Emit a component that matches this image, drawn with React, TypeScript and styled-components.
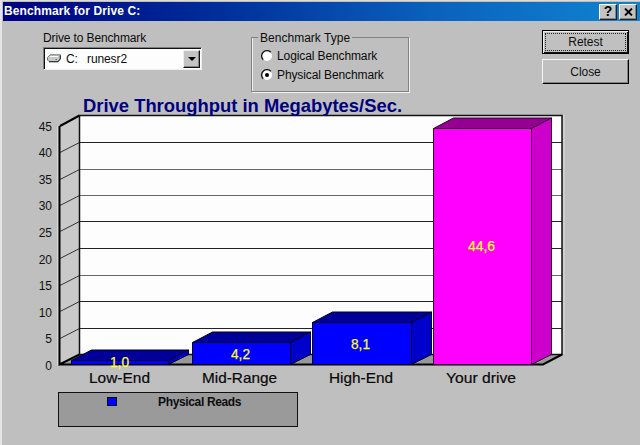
import React from 'react';
import styled, { createGlobalStyle } from 'styled-components';

const GlobalStyle = createGlobalStyle`
  * { box-sizing: border-box; }
  body { margin: 0; background: #bfbfbf; font-family: 'Liberation Sans', Arial, sans-serif; }
`;

const Dialog = styled.div`
  width: 640px;
  height: 445px;
  overflow: hidden;
  background: #bfbfbf;
  border-top: 1px solid #dcdcdc;
  border-left: 2px solid #e4e4e4;
  padding: 1px 0 0 1px;
  color: #0c0c0c;
`;

const TitleBar = styled.header`
  display: flex;
  align-items: center;
  height: 19px;
  padding: 0 3px 0 1px;
  background: linear-gradient(90deg, #000080 0%, #00309c 35%, #0b62bd 68%, #1084d0 100%);
`;

const Title = styled.h1`
  flex: 1;
  margin: 0;
  font-size: 12px;
  line-height: 19px;
  letter-spacing: 0.1px;
  color: #fff;
`;

const CaptionButton = styled.button<{ $gap?: number }>`
  display: flex;
  align-items: center;
  justify-content: center;
  width: 18px;
  height: 16px;
  margin-left: ${(p) => p.$gap ?? 0}px;
  padding: 0;
  background: #c3c3c3;
  border: 1px solid;
  border-color: #fff #202020 #202020 #fff;
  box-shadow: inset -1px -1px #858585;
  font: bold 14px/13px 'Liberation Sans', Arial, sans-serif;
  color: #000;
`;

const Controls = styled.section`
  display: flex;
  align-items: flex-start;
  height: 73px;
  padding: 9px 10px 0 40px;
`;

const DriveField = styled.div`
  width: 159px;
  margin-right: 49px;
`;

const Label = styled.div`
  height: 17px;
  font-size: 12px;
  line-height: 16px;
  letter-spacing: -0.13px;
  white-space: nowrap;
`;

const Select = styled.div`
  display: flex;
  align-items: center;
  height: 23px;
  padding: 0 1px 0 3px;
  background: #fdfdfd;
  border: 1px solid;
  border-color: #808080 #eee #eee #808080;
  box-shadow: inset 1px 1px #101010;
  font-size: 12px;
  letter-spacing: -0.1px;
`;

const DriveLetter = styled.span`
  width: 21px;
  margin-left: 5px;
`;

const DriveName = styled.span`
  flex: 1;
`;

const DropButton = styled.button`
  display: flex;
  align-items: center;
  justify-content: center;
  width: 17px;
  height: 18px;
  padding: 0;
  background: #c3c3c3;
  border: 1px solid;
  border-color: #eee #111 #111 #eee;
  box-shadow: inset -1px -1px #848484;
`;

const Group = styled.fieldset`
  width: 158px;
  height: 63px;
  margin: -1px 133px 0 0;
  padding: 0 0 0 9px;
  min-width: 0;
  border: 1px solid #828282;
  box-shadow: 1px 1px #f0f0f0, inset 1px 0 #f0f0f0;
`;

const Legend = styled.legend`
  margin-left: -3px;
  padding: 0 2px;
  height: 17px;
  font-size: 12px;
  line-height: 18px;
  letter-spacing: 0.02px;
`;

const Radio = styled.label`
  display: flex;
  align-items: center;
  gap: 4px;
  height: 19px;
  font-size: 12px;
  letter-spacing: -0.11px;
  white-space: nowrap;
`;

const Buttons = styled.div`
  display: flex;
  flex-direction: column;
  gap: 5px;
`;

const PushButton = styled.button<{ $focused?: boolean }>`
  width: 87px;
  height: ${(p) => (p.$focused ? 24 : 25)}px;
  padding: 1px;
  background: #c0c0c0;
  border: 1px solid;
  border-color: ${(p) => (p.$focused ? '#000' : '#f6f6f6 #000 #000 #f6f6f6')};
  box-shadow: ${(p) =>
    p.$focused ? 'inset 1px 1px #eee, inset -1px -1px #111' : 'inset -1px -1px #828282'};
  font: 12px 'Liberation Sans', Arial, sans-serif;
  letter-spacing: -0.05px;
  color: #101010;
`;

const FocusRing = styled.span`
  display: flex;
  align-items: center;
  justify-content: center;
  height: 18px;
  margin: 0 1px;
  border: 1px dotted #222;
`;

const Chart = styled.svg`
  display: block;
  width: 637px;
  height: 295px;
`;

const Legends = styled.footer`
  display: flex;
  align-items: flex-start;
  width: 240px;
  height: 35px;
  margin: 3px 0 0 55px;
  padding: 4px 0 0 48px;
  background: #999a99;
  border: 1px solid #111;
`;

const Swatch = styled.span`
  width: 10px;
  height: 9px;
  background: #0000fc;
  border: 1px solid #080820;
`;

const LegendText = styled.span`
  margin-left: 41px;
  font-size: 12px;
  font-weight: bold;
  line-height: 10px;
  letter-spacing: -0.35px;
`;

const bars = [
  { name: 'Low-End', value: '1,0', x: 71.5, y: 360.5, w: 97, tx: 89, tw: 61, vx: 110, vy: 367, vw: 19 },
  { name: 'Mid-Range', value: '4,2', x: 192.5, y: 342.5, w: 98, tx: 202, tw: 75, vx: 231, vy: 359, vw: 19 },
  { name: 'High-End', value: '8,1', x: 312.5, y: 322.5, w: 99, tx: 329, tw: 64, vx: 351, vy: 349, vw: 19 },
  { name: 'Your drive', value: '44,6', x: 433.5, y: 128.5, w: 98, tx: 446, tw: 70, vx: 468, vy: 251, vw: 27, own: true },
];
const backLines = [142.5, 169.5, 195.5, 221.5, 248.5, 275.5, 301.5, 328.5];
const labels = [45, 40, 35, 30, 25, 20, 15, 10, 5, 0];

const RadioMark = ({ on }: { on?: boolean }) => (
  <svg width="12" height="12" viewBox="0 0 12 12">
    <circle cx="6" cy="6" r="5" fill="#fff" />
    <path d="M2.2 9.8A5.2 5.2 0 0 1 9.8 2.2" fill="none" stroke="#111" strokeWidth="1.3" />
    {on && <circle cx="6" cy="6" r="2" fill="#000" />}
  </svg>
);

function ThroughputChart() {
  return (
    <Chart viewBox="3 94 637 295" fontFamily="'Liberation Sans', Arial, sans-serif">
      <path d="M59.5 126.5 79.5 115.5V354.5L59.5 364.5Z" fill="#c9c9c9" />
      <path d="M79.5 115.5H562V354.5H79.5Z" fill="#fcfdfc" />
      <path d="M59.5 364.5 79.5 354.5H562L543 364.5Z" fill="#989898" />
      {backLines.map((y, i) => (
        <g key={y} fill="none" stroke={[1, 2, 5].includes(i) ? '#686868' : '#222'}>
          <path d={`M79.5 ${y}H562`} />
          <path d={`M60 ${y + 10}L79.5 ${y}`} stroke="#333" />
        </g>
      ))}
      <path d="M60 126 79.5 115.5" stroke="#000" strokeWidth="2" />
      <path d="M79.5 115.5V354.5H562V115.5Z" fill="none" stroke="#111" strokeWidth="1.5" />
      <path d="M564 115V354" stroke="#ddd" />
      <path d="M59.5 126V364.5L79.5 354.5M59.5 364.5H543L562 354.5" fill="none" stroke="#000" strokeWidth="2" />
      <path d="M57.5 126V365" stroke="#d9d9d9" />
      <text x="83" y="112" fontSize="18.5" fontWeight="bold" fill="#000080" textLength="319" lengthAdjust="spacingAndGlyphs">
        Drive Throughput in Megabytes/Sec.
      </text>
      {bars.map((b) => (
        <g key={b.name} strokeWidth="1" stroke={b.own ? '#300030' : '#000020'} strokeLinejoin="round">
          <path d={`M${b.x} ${b.y}l20 -10.5h${b.w}l-20 10.5Z`} fill={b.own ? '#94008f' : '#000098'} />
          <path d={`M${b.x + b.w} ${b.y}l20 -10.5V354.5L${b.x + b.w} 364.5Z`} fill={b.own ? '#cd00cb' : '#0000cc'} />
          <path d={`M${b.x} ${b.y}h${b.w}V364.5H${b.x}Z`} fill={b.own ? '#ff00ff' : '#0000ff'} />
          <text x={b.vx} y={b.vy} fontSize="14" fill="#ffff20" stroke="#ffff20" strokeWidth="0.25" textLength={b.vw} lengthAdjust="spacingAndGlyphs">{b.value}</text>
          <text x={b.tx} y="383" fontSize="15" fill="#080808" stroke="#080808" strokeWidth="0.2" textLength={b.tw} lengthAdjust="spacingAndGlyphs">{b.name}</text>
        </g>
      ))}
      {labels.map((n, i) => (
        <text key={n} x="52" y={130.5 + i * 26.6} fontSize="12" fill="#111" textAnchor="end">{n}</text>
      ))}
    </Chart>
  );
}

export default function App() {
  return (
    <>
      <GlobalStyle />
      <Dialog>
        <TitleBar>
          <Title>Benchmark for Drive C:</Title>
          <CaptionButton aria-label="Help">?</CaptionButton>
          <CaptionButton $gap={2} aria-label="Close window">
            <svg width="9" height="8" viewBox="0 0 9 8"><path d="M1 .5 8 7.5M8 .5 1 7.5" stroke="#000" strokeWidth="1.8" /></svg>
          </CaptionButton>
        </TitleBar>
        <Controls>
          <DriveField>
            <Label>Drive to Benchmark</Label>
            <Select>
              <svg width="14" height="9" viewBox="0 0 14 9">
                <path d="M.5 3.5 3 .8H13.3V4.5L11 7.5H2L.5 6Z" fill="#c8c8c8" stroke="#777" />
                <path d="M2 7.8H11L13.3 5V1.5" fill="none" stroke="#222" />
                <path d="M3 2.5H11" stroke="#fff" />
                <path d="M8.5 5.5H10" stroke="#21a621" />
              </svg>
              <DriveLetter>C:</DriveLetter>
              <DriveName>runesr2</DriveName>
              <DropButton aria-label="Choose drive">
                <svg width="8" height="4" viewBox="0 0 8 4"><path d="M0 0H8L4 4Z" /></svg>
              </DropButton>
            </Select>
          </DriveField>
          <Group>
            <Legend>Benchmark Type</Legend>
            <Radio><RadioMark />Logical Benchmark</Radio>
            <Radio><RadioMark on />Physical Benchmark</Radio>
          </Group>
          <Buttons>
            <PushButton $focused><FocusRing>Retest</FocusRing></PushButton>
            <PushButton>Close</PushButton>
          </Buttons>
        </Controls>
        <ThroughputChart />
        <Legends><Swatch /><LegendText>Physical Reads</LegendText></Legends>
      </Dialog>
    </>
  );
}
